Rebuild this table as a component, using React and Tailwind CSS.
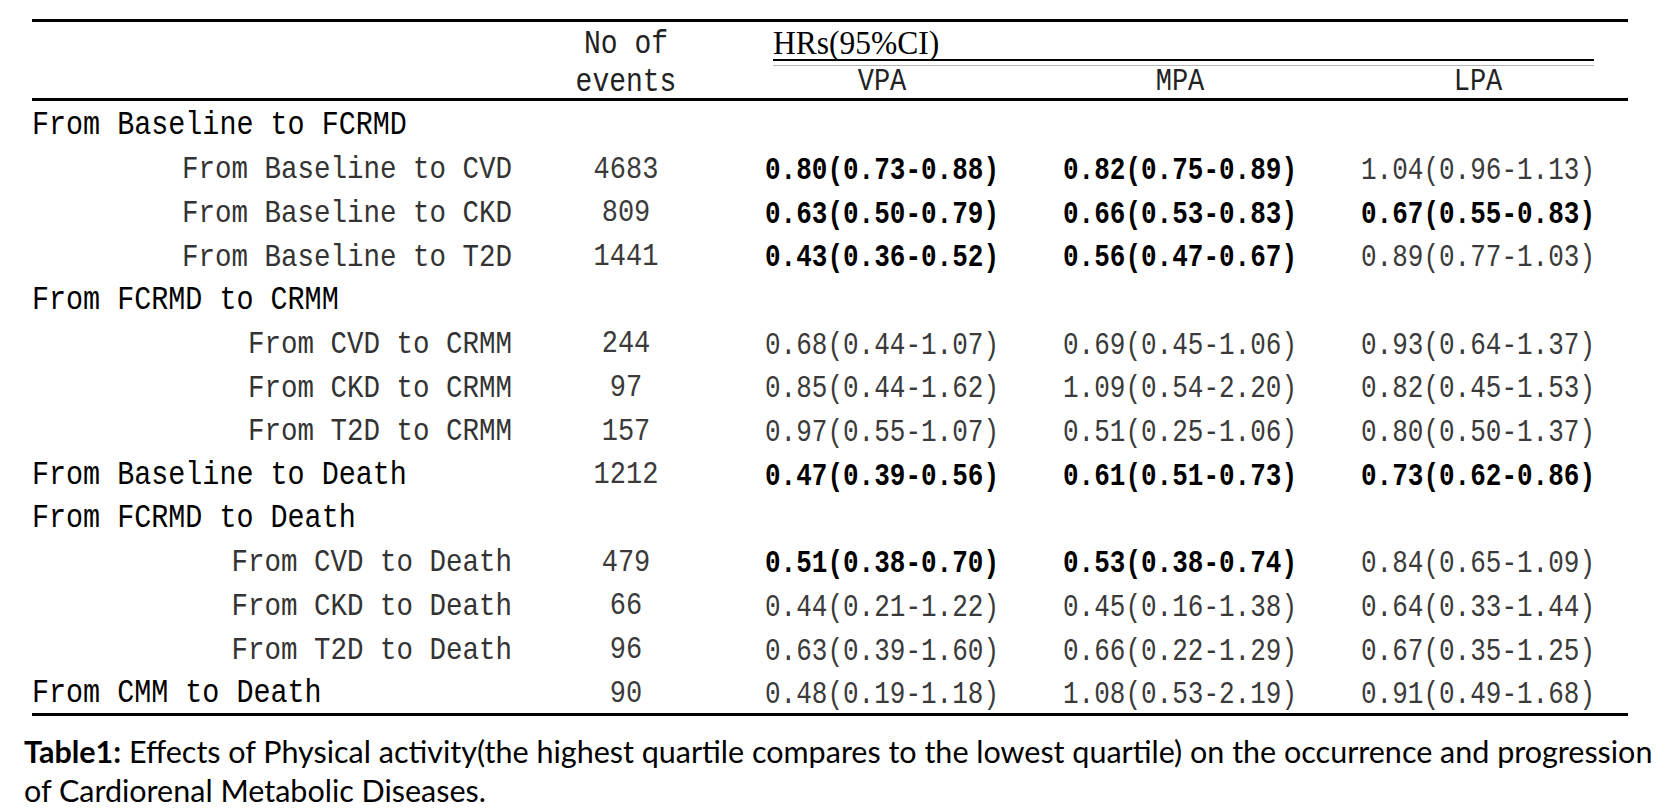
import React from 'react';

const rows = [
  { label: 'From Baseline to FCRMD', group: true },
  { label: 'From Baseline to CVD', n: '4683', v: [['0.80(0.73-0.88)', true], ['0.82(0.75-0.89)', true], ['1.04(0.96-1.13)', false]] },
  { label: 'From Baseline to CKD', n: '809', v: [['0.63(0.50-0.79)', true], ['0.66(0.53-0.83)', true], ['0.67(0.55-0.83)', true]] },
  { label: 'From Baseline to T2D', n: '1441', v: [['0.43(0.36-0.52)', true], ['0.56(0.47-0.67)', true], ['0.89(0.77-1.03)', false]] },
  { label: 'From FCRMD to CRMM', group: true },
  { label: 'From CVD to CRMM', n: '244', v: [['0.68(0.44-1.07)', false], ['0.69(0.45-1.06)', false], ['0.93(0.64-1.37)', false]] },
  { label: 'From CKD to CRMM', n: '97', v: [['0.85(0.44-1.62)', false], ['1.09(0.54-2.20)', false], ['0.82(0.45-1.53)', false]] },
  { label: 'From T2D to CRMM', n: '157', v: [['0.97(0.55-1.07)', false], ['0.51(0.25-1.06)', false], ['0.80(0.50-1.37)', false]] },
  { label: 'From Baseline to Death', group: true, n: '1212', v: [['0.47(0.39-0.56)', true], ['0.61(0.51-0.73)', true], ['0.73(0.62-0.86)', true]] },
  { label: 'From FCRMD to Death', group: true },
  { label: 'From CVD to Death', n: '479', v: [['0.51(0.38-0.70)', true], ['0.53(0.38-0.74)', true], ['0.84(0.65-1.09)', false]] },
  { label: 'From CKD to Death', n: '66', v: [['0.44(0.21-1.22)', false], ['0.45(0.16-1.38)', false], ['0.64(0.33-1.44)', false]] },
  { label: 'From T2D to Death', n: '96', v: [['0.63(0.39-1.60)', false], ['0.66(0.22-1.29)', false], ['0.67(0.35-1.25)', false]] },
  { label: 'From CMM to Death', group: true, n: '90', v: [['0.48(0.19-1.18)', false], ['1.08(0.53-2.19)', false], ['0.91(0.49-1.68)', false]] },
];

const cols = 'grid grid-cols-[488px_212px_300px_296px_300px]';

// the original glyphs are tall and narrow, so stretch the mono face a little
function Tall({ children, k = 'scale-y-[1.17]' }) {
  return <span className={`inline-block ${k}`}>{children}</span>;
}

function Row({ row }) {
  return (
    <div className={`${cols} h-[43.7px] pt-[7px] items-center`}>
      {row.group ? (
        <div className="text-[28.4px] leading-none text-black whitespace-nowrap">
          <Tall>{row.label}</Tall>
        </div>
      ) : (
        <div className="text-[27.5px] leading-none text-[#333] text-right pr-[8px] whitespace-nowrap">
          <Tall>{row.label}</Tall>
        </div>
      )}
      <div className="text-[27px] leading-none text-[#3a3a3a] text-center">
        <Tall>{row.n}</Tall>
      </div>
      {(row.v || []).map(([val, bold], i) => (
        <div
          key={i}
          className={`text-[26px] leading-none text-center whitespace-nowrap ${bold ? 'font-bold text-black' : 'text-[#3a3a3a]'}`}
        >
          <Tall k="scale-y-[1.22]">{val}</Tall>
        </div>
      ))}
    </div>
  );
}

export default function App() {
  return (
    <div className="w-[1671px] h-[808px] overflow-hidden bg-white font-['Liberation_Mono',monospace]">
      <div className="ml-[32px] w-[1596px] pt-[19px]">
        <div className="border-t-[3px] border-black" />

        <div className={`${cols} h-[45px]`}>
          <div />
          <div className="flex items-center justify-center text-[28px] leading-none text-[#222] whitespace-pre">
            <Tall>No of</Tall>
          </div>
          <div className="col-span-3 flex flex-col justify-end pl-[41px] pr-[34px] pb-[1px]">
            <div className="font-['Liberation_Serif',serif] text-[31.5px] leading-none text-black">
              <span className="inline-block origin-bottom scale-y-[1.05]">HRs(95%CI)</span>
            </div>
            <div className="h-[2px] bg-black" />
            <div className="mt-[4px] h-px bg-[#b5b5b5]" />
          </div>
        </div>

        <div className={`${cols} h-[31px] items-center`}>
          <div />
          <div className="text-[28px] leading-none text-[#222] text-center"><Tall>events</Tall></div>
          <div className="text-[27px] leading-none text-[#222] text-center"><Tall>VPA</Tall></div>
          <div className="text-[27px] leading-none text-[#222] text-center"><Tall>MPA</Tall></div>
          <div className="text-[27px] leading-none text-[#222] text-center"><Tall>LPA</Tall></div>
        </div>

        <div className="border-t-[3px] border-black" />

        {rows.map((r, i) => (
          <Row key={i} row={r} />
        ))}

        <div className="border-t-[3px] border-black" />

        <p className="mt-[16px] -ml-[8px] font-['Lato',sans-serif] text-[30.5px] leading-[39px] text-black whitespace-nowrap">
          <span className="font-bold">Table1:</span> Effects of Physical activity(the highest quartile compares to the lowest quartile) on the occurrence and progression
          <br />
          of Cardiorenal Metabolic Diseases.
        </p>
      </div>
    </div>
  );
}
